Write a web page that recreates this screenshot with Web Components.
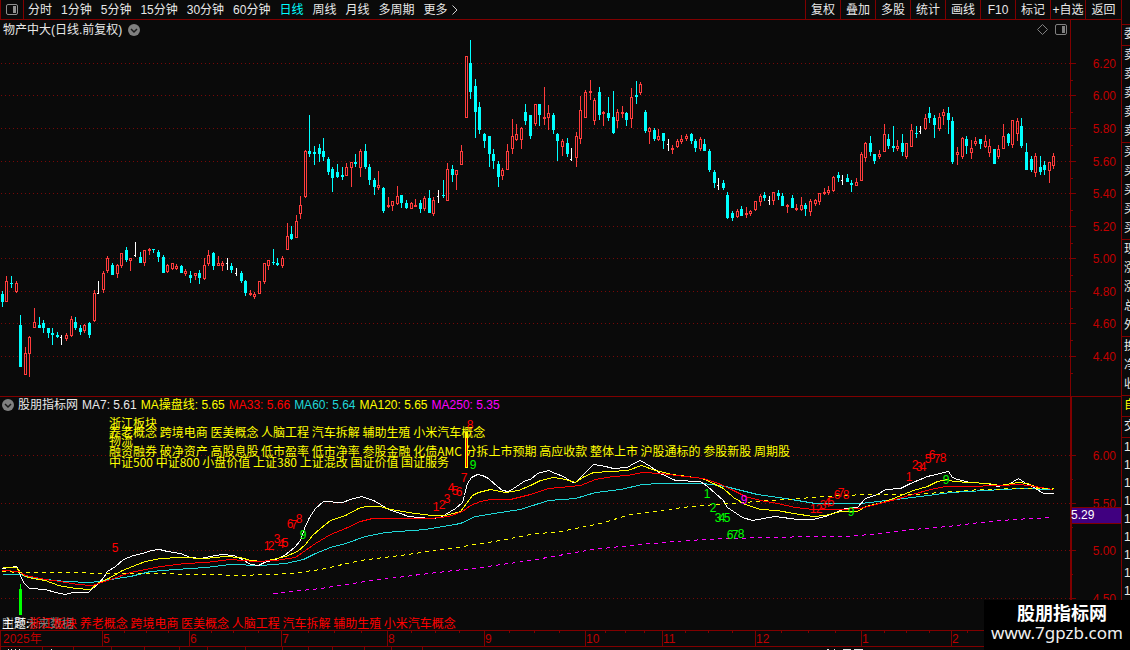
<!DOCTYPE html>
<html lang="zh-CN">
<head>
<meta charset="utf-8">
<title>物产中大 日线</title>
<style>
    html, body {
        margin: 0;
        min-height: 100%;
        background: #0a0a0a;
    }
    body {
        font: 12px/16px "Liberation Sans", "Noto Sans CJK SC", sans-serif;
        color: #e8e8e8;
        overflow: hidden;
    }
</style>
</head>
<body>
<stock-app>
    <tool-bar slot="toolbar"></tool-bar>
    <price-chart slot="price">物产中大(日线.前复权)</price-chart>
    <indicator-chart slot="indicator">股朋指标网</indicator-chart>
    <time-axis slot="time"></time-axis>
    <quote-strip slot="side"></quote-strip>
    <site-mark slot="mark">
        <strong>股朋指标网</strong>
        <a slot="link" href="#site">www.7gpzb.com</a>
    </site-mark>
</stock-app>
<script>
"use strict";

// kind x high top bottom low, u = up, d = down, w = unchanged
const CANDLES = `
d 2 291 294 302 307;u 6 276 281 302 302;d 11 276 283 284 288;u 16 281 283 292 293;d 20 315 325 367 367;u 25 347 353 375 375
u 29 336 337 354 377;u 34 308 322 328 328;d 39 317 325 328 328;d 43 320 323 328 333;d 48 328 328 333 338;d 52 328 333 335 345
d 57 332 335 337 338;w 61 335 337 338 345;u 66 333 335 339 341;u 71 316 319 336 337;d 75 317 322 328 330;d 80 325 328 332 335
u 84 324 325 331 333;d 89 322 323 335 338;u 94 290 293 321 322;w 98 281 293 294 294;u 103 271 273 290 293;u 107 256 258 271 273
d 112 263 265 275 275;u 117 264 265 274 278;u 121 253 253 266 268;d 126 247 250 260 262;u 130 258 258 261 271;w 135 242 255 256 257
d 140 252 257 263 263;u 144 250 250 263 266;u 149 248 249 251 255;d 153 249 249 250 253;d 158 250 252 257 262;d 163 255 257 273 273
u 167 264 265 272 273;u 172 263 263 269 270;u 176 264 266 269 270;d 181 265 266 273 273;u 185 269 271 274 276;d 190 271 275 278 283
u 195 273 273 276 280;d 199 270 273 278 284;u 204 258 265 279 280;u 208 250 255 264 266;d 213 252 253 266 270;u 218 256 263 266 266
u 222 261 263 266 271;w 227 258 263 264 270;d 231 263 266 270 273;w 236 268 273 274 276;d 241 271 273 281 283;d 245 280 281 293 296
u 250 290 293 295 296;u 254 292 294 297 299;u 259 281 281 294 294;u 264 263 263 282 284;u 268 260 260 266 270;d 273 249 262 263 265
d 277 258 263 265 266;u 282 256 258 266 268;u 287 223 236 250 250;d 291 226 234 239 240;u 296 215 221 238 238;u 300 196 205 214 219
u 305 150 151 197 198;d 309 115 151 154 157;d 314 146 152 154 165;d 319 144 148 154 162;d 323 138 151 157 161;d 328 157 159 172 175
d 332 167 169 178 192;d 337 164 172 177 178;d 342 167 175 177 180;u 346 163 167 176 176;u 351 162 162 168 187;d 355 154 162 164 167
u 360 149 151 168 177;d 365 144 151 167 169;d 369 164 167 180 185;d 374 178 180 187 195;u 378 171 185 188 190;d 383 187 188 211 213
u 388 197 205 207 208;u 392 201 201 206 211;u 397 186 196 204 205;d 401 195 195 203 208;d 406 200 203 208 209;u 411 202 203 209 209
u 415 199 205 207 207;d 420 200 203 209 213;u 424 196 198 209 211;d 429 190 198 213 213;u 433 197 200 214 216;w 438 190 196 197 203
d 443 180 195 196 198;u 447 163 169 201 201;d 452 165 169 175 182;u 456 170 170 175 190;u 461 145 151 165 165;u 466 56 56 118 118
d 470 40 63 92 99;d 475 79 86 112 138;d 479 102 107 130 134;d 484 133 134 141 148;d 489 136 136 154 167;d 493 149 154 161 169
d 498 161 164 177 187;u 502 168 170 176 180;u 507 144 151 170 170;u 512 119 136 149 154;u 516 124 134 140 141;u 521 127 128 140 149
d 525 104 112 121 125;d 530 115 115 136 139;u 535 104 104 124 126;d 539 104 104 115 126;u 544 87 117 119 125;u 548 105 113 118 130
d 553 113 115 130 134;d 557 133 134 141 161;u 562 139 141 147 156;d 567 138 143 154 157;w 571 148 159 160 161;u 576 132 136 158 167
u 580 96 110 139 144;u 585 90 92 118 118;u 590 80 91 93 100;u 594 98 100 121 125;d 599 87 92 115 120;u 603 111 112 114 126
d 608 97 113 118 121;d 613 91 117 133 134;u 617 109 112 121 128;u 622 106 112 114 118;d 626 112 113 120 126;u 631 88 97 119 128
d 636 81 95 97 104;u 640 82 84 93 95;d 645 110 112 131 133;u 649 127 128 132 144;d 654 128 130 139 141;u 658 129 136 140 141
d 663 133 133 141 149;w 668 139 144 145 151;u 672 145 148 150 154;u 677 139 141 147 148;u 681 135 139 142 144;u 686 134 136 139 141
d 691 133 134 141 144;d 695 139 141 148 152;u 700 137 139 149 151;d 704 139 144 151 151;d 709 149 151 170 172;d 714 170 172 183 188
w 718 178 185 186 190;d 723 180 183 188 190;d 727 192 195 218 219;d 732 211 213 218 221;u 737 209 211 217 218;d 741 206 209 216 216
u 746 207 213 215 218;u 750 210 211 214 216;u 755 201 201 210 211;u 760 194 196 202 206;d 764 192 195 198 201;w 769 196 200 201 205
u 773 192 192 201 205;d 778 190 193 196 200;d 782 193 196 206 206;u 787 204 205 207 213;d 792 195 198 208 208;u 796 204 208 210 211
u 801 197 205 210 211;d 805 203 205 209 216;u 810 199 201 212 216;u 815 199 200 204 206;u 819 193 193 202 205;u 824 188 192 194 195
u 828 186 190 193 195;u 833 176 177 191 192;d 838 172 175 178 182;w 842 175 180 181 185;d 847 174 178 182 182;d 851 180 183 185 192
u 856 178 182 186 186;u 861 152 154 181 181;u 865 142 143 158 162;d 870 136 143 152 156;d 874 154 154 161 164;u 879 150 154 157 159
u 884 124 134 152 152;d 888 134 139 146 149;d 893 126 146 148 152;u 897 140 146 149 151;d 902 134 143 152 156;u 906 143 143 157 159
u 911 124 130 147 147;d 916 126 133 134 138;w 920 126 131 132 134;u 925 114 118 129 130;d 929 107 113 118 123;d 934 115 118 125 138
u 939 113 117 129 131;u 943 109 112 116 125;d 948 107 113 120 134;d 952 117 121 162 164;u 957 147 152 155 165;u 962 137 138 157 159
d 966 136 139 146 154;u 971 140 148 153 159;u 975 137 141 144 146;d 980 139 139 144 149;u 985 135 141 147 148;u 989 139 146 153 157
d 994 149 149 164 164;u 998 145 149 157 159;u 1003 124 136 149 149;d 1008 133 134 143 146;u 1012 120 120 145 148;u 1017 118 121 134 141
d 1021 118 126 146 148;d 1026 143 152 170 170;d 1031 156 159 170 172;u 1035 153 156 173 177;d 1040 156 167 172 175;d 1044 161 165 170 175
u 1049 162 162 171 183;u 1053 153 156 166 169`;

const LINES = [
    { color: "#ff00ff", dash: "4 4", points: "273,593 320,588 365,581 420,574 480,567 530,560 592,549 640,544 687,540 727,538 773,537 810,536 847,536 880,533 913,529 947,526 980,522 1013,519 1050,517" },
    { color: "#20d8d8", points: "2,574 20,574 25,576 45,579 65,581 90,582 110,579 130,576 150,571 175,569 205,567 230,564 260,565 285,563 303,559 315,553 330,547 345,543 365,536 385,532 425,529 460,523 475,516 500,512 520,509 548,500 575,498 595,492 620,489 642,484 660,483 703,483 725,486 745,491 757,494 785,498 815,503 860,503 895,499 920,496 950,492 985,490 1020,488 1053,489" },
    { color: "#ffffff", points: "2,568 16,566 18,569 20,575 23,582 29,588 45,589 55,592 65,594 72,592 88,592 91,589 98,583 104,576 107,571 115,566 123,559 133,555 142,553 151,550 159,549 167,551 180,553 190,557 200,558 210,556 222,554 233,555 242,559 250,564 258,565 264,562 275,559 284,555 294,547 300,540 304,528 309,517 315,508 323,501 342,502 350,499 361,496 373,500 380,504 388,509 400,513 408,516 430,518 440,517 445,514 455,508 462,502 464,495 467,483 471,477 477,474 482,475 488,478 497,486 502,490 508,491 513,488 525,480 530,479 537,473 548,470 555,473 563,476 572,482 575,482 578,479 587,470 593,464 605,466 613,468 627,467 633,463 640,460 650,466 660,473 675,480 700,481 707,486 723,500 727,507 742,517 752,520 763,518 775,516 797,519 812,519 825,516 845,508 857,507 865,498 877,494 885,489 900,488 910,483 927,476 948,471 952,477 957,479 970,482 987,483 997,486 1008,484 1018,478 1027,484 1032,486 1043,493 1053,493" },
    { color: "#ffff00", points: "2,567 16,567 20,572 25,576 32,578 45,580 58,585 75,588 90,589 97,583 110,577 122,570 132,566 145,561 160,558 180,557 205,558 225,556 240,557 250,560 262,561 272,559 285,556 297,551 305,544 312,535 320,528 330,520 345,515 358,508 365,506 380,506 390,509 415,513 432,515 445,515 460,511 466,503 472,495 478,492 490,489 505,492 518,490 530,485 540,480 553,477 565,479 575,482 582,477 593,472 610,471 627,470 641,465 655,470 672,474 687,476 702,478 713,483 723,488 733,497 745,504 760,509 777,510 793,513 813,516 825,515 840,511 857,511 865,506 882,502 893,498 903,494 913,490 927,486 937,481 947,479 953,481 987,483 1000,485 1018,482 1027,483 1037,487 1053,489" },
    { color: "#ff0000", points: "2,570 18,571 25,575 45,579 60,581 77,584 92,585 110,579 130,572 160,566 185,563 205,562 230,559 255,561 275,560 295,557 305,550 315,543 330,534 345,528 360,521 372,518 430,518 448,516 462,511 470,505 480,501 490,499 510,499 530,494 548,488 570,486 580,485 595,479 613,476 627,475 642,472 660,473 685,476 703,478 718,483 733,490 745,496 760,500 777,503 795,507 813,509 840,509 860,508 875,504 895,499 912,494 930,489 945,486 965,486 1000,485 1020,484 1035,486 1052,489" },
    { color: "#ffff00", dash: "4 4", points: "2,571 20,572 150,573 205,574 240,575 290,573 320,569 360,560 400,555 450,548 475,544 500,540 530,534 560,531 600,523 630,514 660,510 690,506 730,503 770,500 813,497 840,495 870,494 915,494 940,492 980,489 1020,488 1053,488" }
];

// digit, centre x, centre y
const COUNTS = {
    "#ff0000": "5 115 548;1 267 546;2 271 546;3 277 539;4 281 544;5 285 543;6 290 524;7 294 525;8 299 519;1 436 507;2 442 505;3 447 499;4 451 488;5 455 491;6 459 492;7 464 478;8 470 425;1 813 509;2 819 509;3 823 505;4 827 503;5 831 502;6 837 495;7 841 493;8 846 495;1 909 477;2 915 465;3 919 467;4 923 467;5 928 459;6 932 455;7 937 459;8 943 458",
    "#00ff00": "9 303 535;9 473 465;1 707 494;2 713 508;3 718 518;4 722 518;5 727 518;6 730 535;7 735 535;8 741 534;9 851 512;9 946 480",
    "#ff00ff": "9 744 500"
};

const SVG_STYLE = `
    svg {
        display: block;
        width: 100%;
        height: auto;
        shape-rendering: crispEdges;
    }
    text {
        font-size: 12px;
    }
    .grid {
        stroke: #780808;
        stroke-dasharray: 1 3;
    }
    .rule {
        stroke: #800000;
    }
    .label {
        fill: #c00000;
    }
`;

const CHEVRON = `
    <svg class="chevron" viewBox="0 0 12 12" width="12" height="12" aria-hidden="true">
        <circle cx="6" cy="6" r="6" fill="#808080"/>
        <path d="M3 5l3 3 3-3" fill="none" stroke="#1a1a1a" stroke-width="1.5"/>
    </svg>`;

function hline(y, x1, x2, cls) {
    return `<line class="${cls}" x1="${x1}" x2="${x2}" y1="${y + 0.5}" y2="${y + 0.5}"/>`;
}

function vline(x, y1, y2, cls) {
    return `<line class="${cls}" x1="${x + 0.5}" x2="${x + 0.5}" y1="${y1}" y2="${y2}"/>`;
}

function axisLabel(text, y) {
    return `<text class="label" x="1116" y="${y + 5}" text-anchor="end">${text}</text>`;
}

class StockApp extends HTMLElement {
    constructor() {
        super();
        this.attachShadow({ mode: "open" });
        this.shadowRoot.innerHTML = `
            <style>
                :host {
                    display: grid;
                    grid-template-columns: minmax(0, 1fr) 9px;
                    position: relative;
                }
                main {
                    display: flex;
                    flex-direction: column;
                    min-width: 0;
                }
                ::slotted(site-mark) {
                    position: absolute;
                    right: 0;
                    bottom: 0;
                }
            </style>
            <main>
                <slot name="toolbar"></slot>
                <slot name="price"></slot>
                <slot name="indicator"></slot>
                <slot name="time"></slot>
            </main>
            <slot name="side"></slot>
            <slot name="mark"></slot>
        `;
    }
}

class ToolBar extends HTMLElement {
    constructor() {
        super();
        this.attachShadow({ mode: "open" });
        const periods = ["分时", "1分钟", "5分钟", "15分钟", "30分钟", "60分钟", "日线", "周线", "月线", "多周期", "更多"];
        const tools = ["复权", "叠加", "多股", "统计", "画线", "F10", "标记", "+自选", "返回"];
        this.shadowRoot.innerHTML = `
            <style>
                :host {
                    display: flex;
                    justify-content: space-between;
                    height: 19px;
                    border-bottom: 1px solid #800000;
                }
                nav, .tools {
                    display: flex;
                    align-items: stretch;
                }
                nav {
                    gap: 9px;
                }
                button {
                    font: inherit;
                    color: inherit;
                    background: none;
                    border: 0;
                    margin: 0;
                    padding: 0;
                    white-space: nowrap;
                    cursor: pointer;
                }
                .layout {
                    width: 24px;
                    margin-right: -5px;
                    border: solid #800000;
                    border-width: 0 1px;
                    display: flex;
                    align-items: center;
                    justify-content: center;
                }
                .active {
                    color: #00ffff;
                }
                .more {
                    display: flex;
                    align-items: center;
                    gap: 4px;
                }
                .tools button {
                    width: 35px;
                    border-left: 1px solid #800000;
                }
                .tools button:last-child {
                    width: 36px;
                }
            </style>
            <nav>
                <button class="layout" aria-label="布局">
                    <svg width="12" height="12" viewBox="0 0 12 12"><rect x=".5" y=".5" width="11" height="10" rx="1.5" fill="none" stroke="#909090"/><path d="M7 2h3v7H7z" fill="#909090"/></svg>
                </button>
                ${periods.map((name) => {
                    if (name === "更多") {
                        return `<button class="more">${name}<svg width="6" height="10" viewBox="0 0 6 10"><path d="M.5.5L5 5 .5 9.5" fill="none" stroke="#d0d0d0"/></svg></button>`;
                    }
                    return `<button class="${name === "日线" ? "active" : ""}">${name}</button>`;
                }).join("")}
            </nav>
            <div class="tools">${tools.map((name) => `<button>${name}</button>`).join("")}</div>
        `;
    }
}

class PriceChart extends HTMLElement {
    constructor() {
        super();
        this.attachShadow({ mode: "open" });
    }
    connectedCallback() {
        this.shadowRoot.innerHTML = `
            <style>
                ${SVG_STYLE}
                :host {
                    display: block;
                    position: relative;
                    border-bottom: 1px solid #800000;
                }
                header {
                    position: absolute;
                    top: 2px;
                    left: 3px;
                    display: flex;
                    align-items: center;
                    gap: 6px;
                }
                header svg {
                    width: 12px;
                    shape-rendering: auto;
                }
                .icons {
                    shape-rendering: auto;
                }
            </style>
            <svg viewBox="0 20 1121 376">${this.grid()}${this.candles()}
                <g class="icons" fill="none" stroke="#808080">
                    <path d="M1042.5 24.5l5 5-5 5-5-5z"/>
                    <rect x="1055.5" y="24.5" width="11" height="10" rx="1.5"/>
                    <path d="M1062 26h3v7h-3z" fill="#808080" stroke="none"/>
                </g>
            </svg>
            <header><slot></slot>${CHEVRON}</header>
        `;
    }
    grid() {
        const rows = [63, 95, 128, 161, 193, 226, 258, 291, 323, 356];
        let out = vline(1070, 20, 396, "rule");
        rows.forEach((y, idx) => {
            out += hline(y, 1, 1070, "grid");
            out += hline(y, 1071, 1076, "rule");
            out += hline(y + 17, 1071, 1073, "rule");
            out += axisLabel((6.2 - idx * 0.2).toFixed(2), y);
        });
        return out;
    }
    candles() {
        const colors = { u: "#ff3c3c", d: "#00ffff", w: "#ffffff" };
        return CANDLES.trim().split(/[;\n]/).map((row) => {
            const kind = row[0];
            const [x, high, top, bottom, low] = row.slice(2).split(" ").map(Number);
            const color = colors[kind];
            if (kind === "w") {
                return `<path fill="${color}" d="M${x} ${high}h1V${low}h-1zM${x - 1} ${top}h1v1h-1z"/>`;
            }
            let d = `M${x} ${high}h1V${top}h-1zM${x} ${bottom}h1V${low}h-1z`;
            d += `M${x - 1} ${top}h3V${bottom}h-3z`;
            if (kind === "u" && bottom - top > 2) {
                d += `M${x} ${top + 1}h1V${bottom - 1}h-1z`;
            }
            return `<path fill="${color}" fill-rule="evenodd" d="${d}"/>`;
        }).join("");
    }
}

class IndicatorChart extends HTMLElement {
    constructor() {
        super();
        this.attachShadow({ mode: "open" });
    }
    connectedCallback() {
        const themes = "养老概念 跨境电商 医美概念 人脑工程 汽车拆解 辅助生殖 小米汽车概念";
        this.shadowRoot.innerHTML = `
            <style>
                ${SVG_STYLE}
                :host {
                    display: block;
                    position: relative;
                }
                .tags {
                    font-family: "Noto Sans CJK SC", sans-serif;
                }
                header {
                    position: absolute;
                    top: 0;
                    left: 2px;
                    display: flex;
                    align-items: center;
                    gap: 4px;
                    white-space: nowrap;
                }
                header svg {
                    width: 12px;
                    shape-rendering: auto;
                }
            </style>
            <svg viewBox="0 397 1121 233">
                ${this.grid()}
                ${LINES.map((line) => `<polyline points="${line.points}" transform="translate(.5 .5)" fill="none" stroke="${line.color}" stroke-dasharray="${line.dash || "none"}"/>`).join("")}
                <path d="M20 584h1v5h1v26h-3v-26h1z" fill="#00ff00"/>
                ${this.counts()}
                <g class="tags" fill="#ffff00">
                    <text x="109" y="428">浙江板块</text>
                    <text x="109" y="437">${themes}</text>
                    <text x="109" y="445">物流</text>
                    <text x="109" y="456">融资融券 破净资产 高股息股 低市盈率 低市净率 参股金融 化债AMC 分拆上市预期 高应收款 整体上市 沪股通标的 参股新股 周期股</text>
                    <text x="109" y="467">中证500 中证800 小盘价值 上证380 上证混改 国证价值 国证服务</text>
                </g>
                <path d="M465 432h3v36h-3z" fill="#ffff00"/>
                <path d="M466 438h1v29h-1z" fill="#ff0000"/>
                <g class="tags">
                    <text x="2" y="628" fill="#808080">附带未来数据</text>
                    <text x="29" y="628" fill="#ff0000">浙江板块 ${themes}</text>
                    <text x="2" y="628" fill="#ffffff">主题:</text>
                </g>
            </svg>
            <header>
                ${CHEVRON}
                <slot></slot>
                <span>MA7: 5.61</span>
                <span style="color:#ffff00">MA操盘线: 5.65</span>
                <span style="color:#ff0000">MA33: 5.66</span>
                <span style="color:#20d8d8">MA60: 5.64</span>
                <span style="color:#ffff00">MA120: 5.65</span>
                <span style="color:#ff00ff">MA250: 5.35</span>
            </header>
        `;
    }
    grid() {
        let out = `<path d="M1070 397h2v233h-2z" fill="#800000"/>`;
        [455, 503, 550, 598].forEach((y, idx) => {
            out += hline(y, 1, 1070, "grid");
            out += hline(y, 1072, 1076, "rule");
            out += hline(y + 24, 1072, 1073, "rule");
            out += axisLabel((6 - idx * 0.5).toFixed(2), y);
        });
        out += `<path d="M1072 507h49v17h-49z" fill="#400080"/>`;
        out += hline(507, 1072, 1121, "rule") + hline(523, 1072, 1121, "rule");
        out += `<text x="1071" y="519" fill="#ffffff">5.29</text>`;
        return out;
    }
    counts() {
        return Object.keys(COUNTS).map((color) => {
            const items = COUNTS[color].split(";").map((item) => {
                const [digit, x, y] = item.split(" ");
                return `<text x="${x}" y="${Number(y) + 4}">${digit}</text>`;
            });
            return `<g fill="${color}" text-anchor="middle">${items.join("")}</g>`;
        }).join("");
    }
}

class TimeAxis extends HTMLElement {
    constructor() {
        super();
        this.attachShadow({ mode: "open" });
        const months = { 5: 102, 6: 189, 7: 281, 8: 387, 9: 484, 10: 585, 11: 662, 12: 755, 1: 861, 2: 951 };
        const minor = [124, 146, 168, 211, 233, 258, 308, 334, 361, 411, 435, 459, 509, 534, 559, 605, 625, 644, 685, 708, 732, 781, 808, 835, 884, 906, 929, 967];
        const lower = [42, 73, 111, 144, 179, 207, 245, 282, 308, 332, 364, 391, 422];
        let out = hline(630, 0, 1121, "rule") + hline(646, 0, 1121, "rule") + vline(0, 630, 650, "rule");
        Object.keys(months).forEach((name) => {
            out += vline(months[name], 630, 646, "rule");
            out += `<text class="label" x="${months[name] + 1}" y="643">${name}</text>`;
        });
        minor.forEach((x) => {
            out += vline(x, 631, 633, "rule");
        });
        lower.forEach((x) => {
            out += vline(x, 647, 650, "rule");
        });
        this.shadowRoot.innerHTML = `
            <style>
                ${SVG_STYLE}
                :host {
                    display: block;
                }
            </style>
            <svg viewBox="0 630 1121 20">${out}
                <path d="M8 649h1m2 0h1m3 0h1m3 0h1m31 0h1M827 649h2m5 0h1m8 0h8m3 0h9" transform="translate(0 .5)" stroke="#e8e8e8"/>
                <text class="label" x="3" y="643">2025年</text>
            </svg>
        `;
    }
}

class QuoteStrip extends HTMLElement {
    constructor() {
        super();
        this.attachShadow({ mode: "open" });
        const groups = ["委", "卖卖卖卖卖", "买买买买买", "现涨涨总外", "换净收"];
        this.shadowRoot.innerHTML = `
            <style>
                :host {
                    display: block;
                    padding-top: 24px;
                    border-left: 1px solid #800000;
                    overflow: hidden;
                }
                section {
                    padding-bottom: 1px;
                    border-top: 1px solid #800000;
                }
                div {
                    padding-left: 2px;
                    line-height: 19px;
                    white-space: nowrap;
                }
                .self {
                    color: #ffff00;
                }
                .ticks div {
                    line-height: 18px;
                }
            </style>
            ${groups.map((names) => `<section>${this.rows(names)}</section>`).join("")}
            <section class="self">${this.rows("自")}</section>
            <section>${this.rows("交")}</section>
            <section class="ticks">${this.rows("111111111")}</section>
        `;
    }
    rows(names) {
        return names.split("").map((name) => `<div>${name}</div>`).join("");
    }
}

class SiteMark extends HTMLElement {
    constructor() {
        super();
        this.attachShadow({ mode: "open" });
        this.shadowRoot.innerHTML = `
            <style>
                :host {
                    display: flex;
                    flex-direction: column;
                    align-items: center;
                    box-sizing: border-box;
                    width: 146px;
                    padding: 5px 0 8px;
                    background: #000;
                    color: #fff;
                    font-size: 18px;
                    line-height: 19px;
                }
                ::slotted(strong) {
                    padding-left: 10px;
                }
                ::slotted(a) {
                    color: #f0f0f0;
                    text-decoration: none;
                    font: 17px/18px "Noto Sans", "Open Sans", sans-serif;
                }
            </style>
            <slot></slot>
            <slot name="link"></slot>
        `;
    }
}

customElements.define("stock-app", StockApp);
customElements.define("tool-bar", ToolBar);
customElements.define("price-chart", PriceChart);
customElements.define("indicator-chart", IndicatorChart);
customElements.define("time-axis", TimeAxis);
customElements.define("quote-strip", QuoteStrip);
customElements.define("site-mark", SiteMark);
</script>
</body>
</html>
